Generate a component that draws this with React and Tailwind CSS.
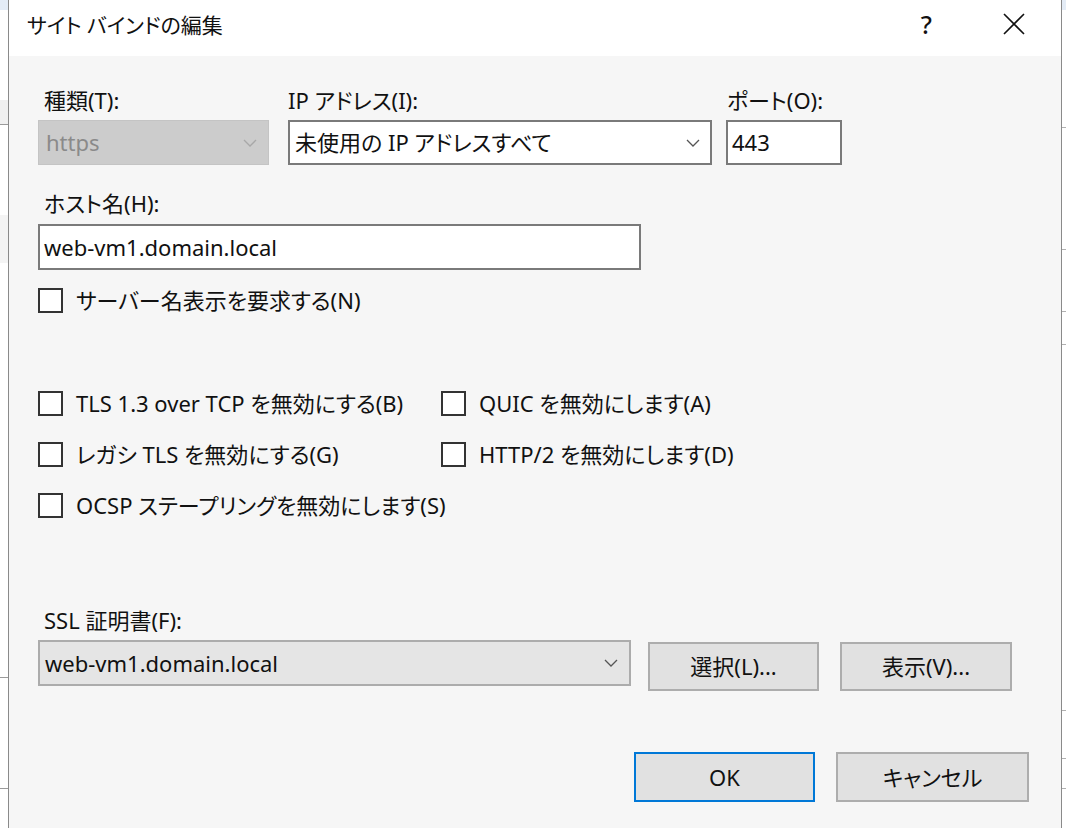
import React from "react";

const FONT = "font-['Noto_Sans','Noto_Sans_CJK_JP',sans-serif] [font-feature-settings:'palt']";

function Chevron({ color = "#606060" }) {
  return (
    <svg width="14" height="8" viewBox="0 0 14 8" className="shrink-0">
      <path d="M1 1 L7 7 L13 1" fill="none" stroke={color} strokeWidth="1.3" />
    </svg>
  );
}

function Checkbox({ label }) {
  return (
    <div className="flex items-center h-[25px]">
      <div className="w-[25px] h-[25px] border-2 border-[#333333] bg-white shrink-0" />
      <span className="ml-[13px] text-[22px] leading-[25px] text-[#111111] whitespace-nowrap">{label}</span>
    </div>
  );
}

function Label({ children, indent = "pl-[6px]" }) {
  return (
    <div className={`h-[24px] leading-[24px] text-[22px] text-[#111111] whitespace-nowrap ${indent}`}>{children}</div>
  );
}

function Button({ children, className = "" }) {
  return (
    <div
      className={`flex items-center justify-center bg-[#e1e1e1] border-2 border-[#adadad] text-[22px] text-[#111111] ${className}`}
    >
      {children}
    </div>
  );
}

export default function App() {
  return (
    <div className={`w-[1066px] h-[828px] flex bg-white overflow-hidden ${FONT}`}>
      {/* left background strip */}
      <div className="w-[8px] flex flex-col shrink-0">
        <div className="h-[10px] bg-[#e4ecf6]" />
        <div className="h-[90px] bg-white" />
        <div className="h-[25px] bg-[#f0f0f0] border-b border-[#9a9a9a]" />
        <div className="h-[90px] bg-white" />
        <div className="h-[48px] bg-[#f4f4f4]" />
        <div className="h-[415px] bg-white border-b border-[#9a9a9a]" />
        <div className="h-[111px] bg-white border-b border-[#9a9a9a]" />
        <div className="flex-1 bg-white" />
      </div>

      {/* dialog */}
      <div className="w-[1054px] shrink-0 flex flex-col border-x border-[#8a8a8a]">
        {/* title bar */}
        <div className="h-[56px] bg-white flex items-center pl-[18px] shrink-0">
          <span className="text-[21px] text-[#111111] leading-none mt-[-6px]">サイト バインドの編集</span>
          <div className="flex-1" />
          <span className="text-[25px] font-medium text-[#111111] leading-none mt-[-8px] mr-[71px]">?</span>
          <svg width="22" height="22" viewBox="0 0 22 22" className="mr-[36px] mt-[-8px]">
            <path d="M1 1 L21 21 M21 1 L1 21" stroke="#111111" strokeWidth="1.6" />
          </svg>
        </div>

        {/* body */}
        <div className="flex-1 bg-[#f6f6f6] pl-[29px] pt-[32px] flex flex-col">
          {/* row 1 */}
          <div className="flex">
            <div className="flex flex-col w-[231px]">
              <Label>種類(T):</Label>
              <div className="mt-[8px] h-[45px] bg-[#cccccc] border border-[#c4c4c4] flex items-center pl-[7px] pr-[11px]">
                <span className="text-[22px] text-[#8a8a8a] flex-1">https</span>
                <Chevron color="#a8a8a8" />
              </div>
            </div>
            <div className="flex flex-col w-[424px] ml-[19px]">
              <Label indent="pl-0">IP アドレス(I):</Label>
              <div className="mt-[8px] h-[45px] bg-white border-2 border-[#7a7a7a] flex items-center pl-[5px] pr-[10px]">
                <span className="text-[22px] text-[#111111] flex-1 whitespace-nowrap">未使用の IP アドレスすべて</span>
                <Chevron color="#555555" />
              </div>
            </div>
            <div className="flex flex-col w-[116px] ml-[14px]">
              <Label indent="pl-[1px]">ポート(O):</Label>
              <div className="mt-[8px] h-[45px] bg-white border-2 border-[#7a7a7a] flex items-center pl-[4px]">
                <span className="text-[22px] text-[#111111]">443</span>
              </div>
            </div>
          </div>

          {/* host */}
          <div className="mt-[26px] flex flex-col w-[603px]">
            <Label>ホスト名(H):</Label>
            <div className="mt-[9px] h-[46px] bg-white border-2 border-[#7a7a7a] flex items-center pl-[4px]">
              <span className="text-[22px] text-[#111111]">web-vm1.domain.local</span>
            </div>
          </div>

          <div className="mt-[18px]">
            <Checkbox label="サーバー名表示を要求する(N)" />
          </div>

          {/* options grid */}
          <div className="mt-[78px] grid grid-cols-[403px_auto] gap-y-[26px]">
            <Checkbox label="TLS 1.3 over TCP を無効にする(B)" />
            <Checkbox label="QUIC を無効にします(A)" />
            <Checkbox label="レガシ TLS を無効にする(G)" />
            <Checkbox label="HTTP/2 を無効にします(D)" />
            <Checkbox label="OCSP ステープリングを無効にします(S)" />
          </div>

          {/* SSL */}
          <div className="mt-[90px]">
            <Label>SSL 証明書(F):</Label>
          </div>
          <div className="mt-[8px] flex items-start">
            <div className="w-[593px] h-[46px] bg-[#e5e5e5] border-2 border-[#acacac] flex items-center pl-[5px] pr-[11px]">
              <span className="text-[22px] text-[#111111] flex-1">web-vm1.domain.local</span>
              <Chevron color="#555555" />
            </div>
            <Button className="ml-[17px] mt-[2px] w-[171px] h-[49px]">選択(L)...</Button>
            <Button className="ml-[21px] mt-[2px] w-[172px] h-[49px]">表示(V)...</Button>
          </div>

          {/* OK / Cancel */}
          <div className="mt-[61px] flex">
            <div className="ml-[596px] w-[181px] h-[50px] flex items-center justify-center bg-[#e1e1e1] border-2 border-[#0078d7] text-[22px] text-[#111111]">
              OK
            </div>
            <Button className="ml-[21px] w-[193px] h-[50px]">キャンセル</Button>
          </div>
        </div>
      </div>

      {/* right background strip */}
      <div className="flex-1 flex flex-col">
        <div className="h-[10px] bg-[#e4ecf6]" />
        <div className="h-[118px] bg-white border-b border-[#b0b0b0]" />
        <div className="h-[122px] bg-white border-b border-[#b0b0b0]" />
        <div className="h-[62px] bg-white border-b border-[#b0b0b0]" />
        <div className="h-[33px] bg-white border-b border-[#b0b0b0]" />
        <div className="h-[366px] bg-white border-b border-[#b0b0b0]" />
        <div className="h-[48px] bg-white border-b border-[#b0b0b0]" />
        <div className="h-[30px] bg-white border-b border-[#b0b0b0]" />
        <div className="flex-1 bg-white" />
      </div>
    </div>
  );
}
